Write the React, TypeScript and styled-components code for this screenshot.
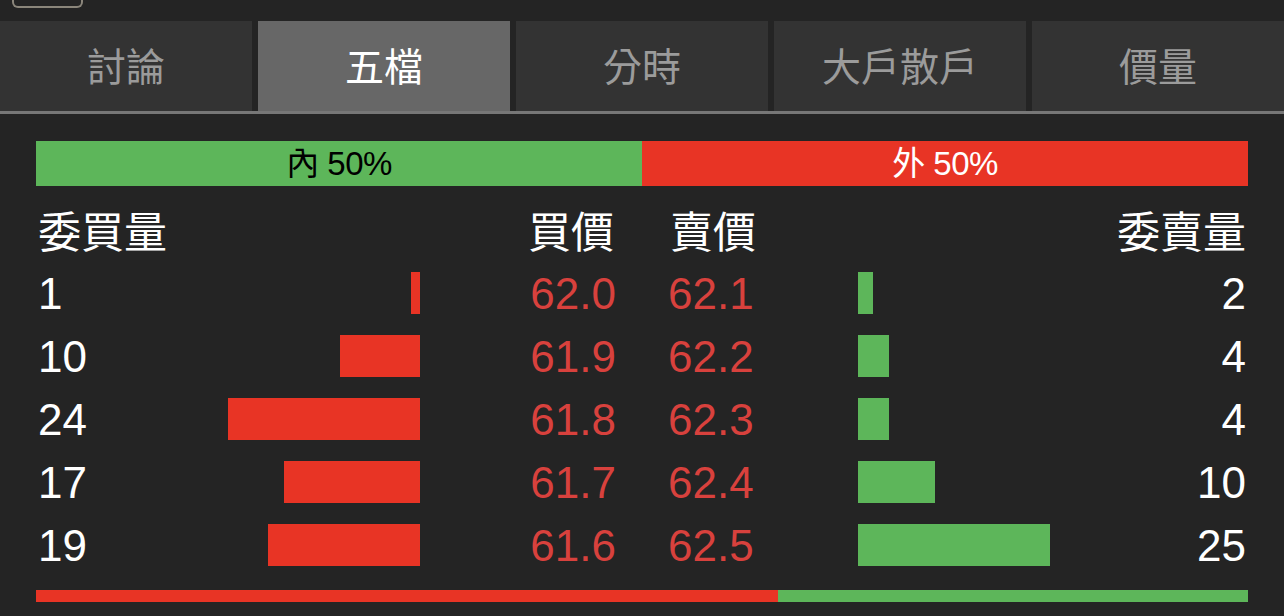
import styled, { createGlobalStyle } from "styled-components";

type Level = {
  bidQty: number;
  bid: string;
  ask: string;
  askQty: number;
};

const TABS = ["討論", "五檔", "分時", "大戶散戶", "價量"];
const ACTIVE_TAB = 1;

const LEVELS: Level[] = [
  { bidQty: 1, bid: "62.0", ask: "62.1", askQty: 2 },
  { bidQty: 10, bid: "61.9", ask: "62.2", askQty: 4 },
  { bidQty: 24, bid: "61.8", ask: "62.3", askQty: 4 },
  { bidQty: 17, bid: "61.7", ask: "62.4", askQty: 10 },
  { bidQty: 19, bid: "61.6", ask: "62.5", askQty: 25 },
];

const BAR_MAX = 192;
const RED = "#e83425";
const GREEN = "#5db65a";

const GlobalStyle = createGlobalStyle`
  html, body {
    margin: 0;
    padding: 0;
    background: #242424;
  }
  body {
    font-family: "Liberation Sans", "Noto Sans CJK TC", sans-serif;
    color: #fff;
  }
`;

export default function App() {
  const maxBid = Math.max(...LEVELS.map((l) => l.bidQty));
  const maxAsk = Math.max(...LEVELS.map((l) => l.askQty));
  const barWidth = (qty: number, max: number) =>
    Math.max(9, Math.round((qty / max) * BAR_MAX));

  return (
    <Page>
      <GlobalStyle />
      <TopStrip>
        <Badge />
      </TopStrip>
      <TabBar>
        {TABS.map((tab, i) => (
          <Tab key={tab} active={i === ACTIVE_TAB}>
            {tab}
          </Tab>
        ))}
      </TabBar>
      <Content>
        <RatioBar>
          <RatioPart color={GREEN} textColor="#000">
            內 50%
          </RatioPart>
          <RatioPart color={RED} textColor="#fff">
            外 50%
          </RatioPart>
        </RatioBar>
        <Row>
          <HeaderCell>委買量</HeaderCell>
          <HeaderCell align="right">買價</HeaderCell>
          <span />
          <HeaderCell>賣價</HeaderCell>
          <HeaderCell align="right">委賣量</HeaderCell>
        </Row>
        {LEVELS.map((level) => (
          <Row key={level.bid}>
            <BidCell>
              <Qty>{level.bidQty}</Qty>
              <Bar
                color={RED}
                style={{ width: barWidth(level.bidQty, maxBid) }}
              />
            </BidCell>
            <Price align="right">{level.bid}</Price>
            <span />
            <Price>{level.ask}</Price>
            <AskCell>
              <Bar
                color={GREEN}
                style={{ width: barWidth(level.askQty, maxAsk) }}
              />
              <Qty>{level.askQty}</Qty>
            </AskCell>
          </Row>
        ))}
        <VolumeBar>
          <VolumePart color={RED} style={{ flexBasis: "61.2%" }} />
          <VolumePart color={GREEN} style={{ flexBasis: "38.8%" }} />
        </VolumeBar>
      </Content>
    </Page>
  );
}

const Page = styled.div`
  width: 1284px;
  height: 616px;
  overflow: hidden;
  background: #242424;
`;

const TopStrip = styled.div`
  height: 21px;
  padding-left: 12px;
  box-sizing: border-box;
`;

const Badge = styled.div`
  width: 67px;
  height: 6px;
  border: 2px solid #8b867b;
  border-top: none;
  border-radius: 0 0 6px 6px;
`;

const TabBar = styled.div`
  display: grid;
  grid-template-columns: repeat(5, 1fr);
  column-gap: 6px;
  height: 90px;
  border-bottom: 3px solid #777777;
`;

const Tab = styled.div<{ active?: boolean }>`
  display: flex;
  align-items: center;
  justify-content: center;
  background: ${(p) => (p.active ? "#676767" : "#333333")};
  color: ${(p) => (p.active ? "#ffffff" : "#9b9b9b")};
  font-family: "Noto Sans CJK TC", sans-serif;
  font-size: 39px;
  padding-bottom: 4px;
`;

const Content = styled.div`
  padding: 27px 36px 0;
`;

const RatioBar = styled.div`
  display: flex;
  height: 45px;
  margin-bottom: 13px;
`;

const RatioPart = styled.div<{ color: string; textColor: string }>`
  flex: 1;
  display: flex;
  align-items: center;
  justify-content: center;
  background: ${(p) => p.color};
  color: ${(p) => p.textColor};
  font-family: "Liberation Sans", "Noto Sans CJK TC", sans-serif;
  font-size: 33px;
  line-height: 1;
  letter-spacing: -0.5px;
`;

const Row = styled.div`
  display: grid;
  grid-template-columns: 384px 196px 52px 190px 390px;
  align-items: center;
  height: 63px;
`;

const HeaderCell = styled.div<{ align?: "left" | "right" }>`
  font-family: "Noto Sans CJK TC", sans-serif;
  font-size: 43px;
  line-height: 1;
  color: #fff;
  text-align: ${(p) => p.align ?? "left"};
  padding: 0 2px;
  margin-top: -2px;
`;

const BidCell = styled.div`
  display: flex;
  align-items: center;
  justify-content: space-between;
`;

const AskCell = styled.div`
  display: flex;
  align-items: center;
  justify-content: space-between;
`;

const Qty = styled.span`
  font-size: 44px;
  line-height: 1;
  color: #fff;
  padding: 0 2px;
`;

const Bar = styled.div<{ color: string }>`
  height: 42px;
  background: ${(p) => p.color};
  margin-top: -2px;
`;

const Price = styled.div<{ align?: "left" | "right" }>`
  font-size: 44px;
  line-height: 1;
  color: #d8413d;
  text-align: ${(p) => p.align ?? "left"};
`;

const VolumeBar = styled.div`
  display: flex;
  height: 12px;
  margin-top: 13px;
`;

const VolumePart = styled.div<{ color: string }>`
  background: ${(p) => p.color};
`;
